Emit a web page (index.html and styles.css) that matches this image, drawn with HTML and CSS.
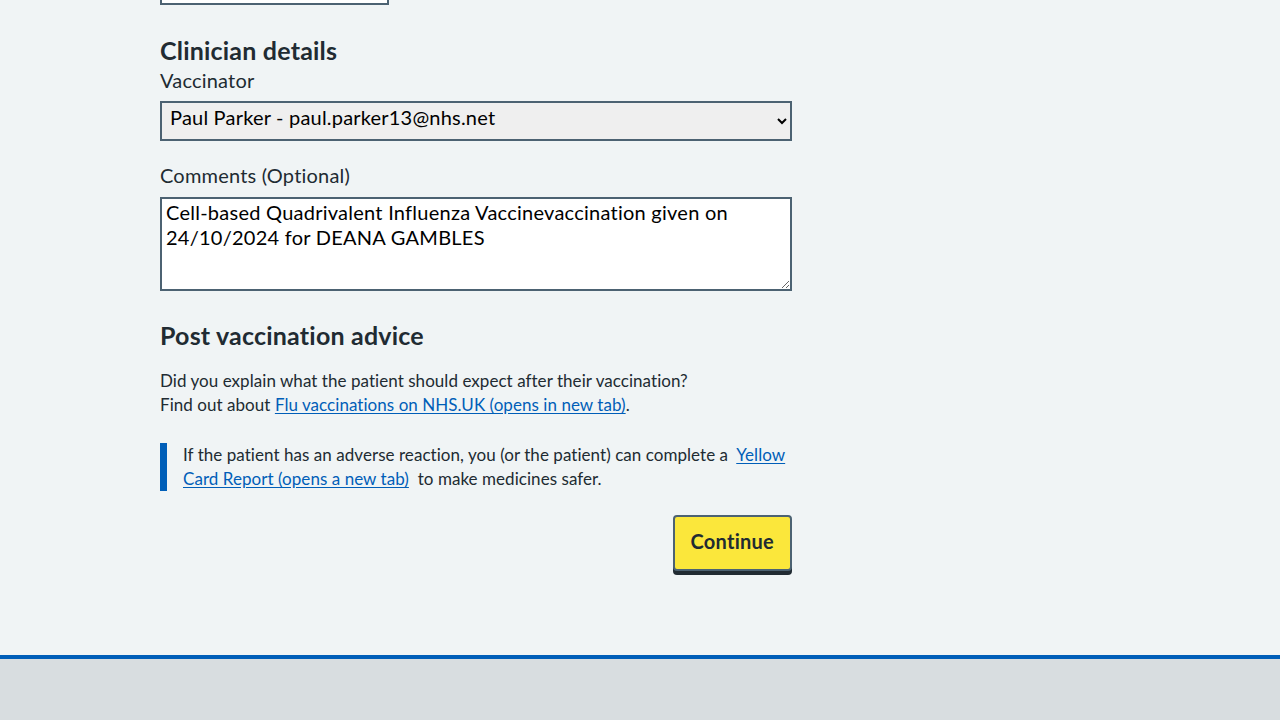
FILE: index.html
```html
<!DOCTYPE html>
<html lang="en">
<head>
<meta charset="utf-8">
<title>Clinician details</title>
<link rel="stylesheet" href="styles.css">
</head>
<body>
<main class="container">
  <div class="column">
    <div class="prev-input"></div>

    <h2 class="heading heading--first">Clinician details</h2>
    <div class="form-group">
      <label class="label" for="vaccinator">Vaccinator</label>
      <select id="vaccinator" class="select">
        <option>Paul Parker - paul.parker13@nhs.net</option>
      </select>
    </div>

    <div class="form-group form-group--comments">
      <label class="label label--comments" for="comments">Comments (Optional)</label>
      <textarea id="comments" class="textarea" rows="3">Cell-based Quadrivalent Influenza Vaccinevaccination given on 24/10/2024 for DEANA GAMBLES</textarea>
    </div>

    <h2 class="heading heading--advice">Post vaccination advice</h2>
    <p class="body">Did you explain what the patient should expect after their vaccination?<br>Find out about <a class="link" href="#">Flu vaccinations on NHS.UK (opens in new tab)</a>.</p>

    <div class="inset">
      <p class="inset__text">If the patient has an adverse reaction, you (or the patient) can complete a&nbsp; <a class="link" href="#">Yellow Card Report (opens a new tab)</a>&nbsp; to make medicines safer.</p>
    </div>

    <div class="actions">
      <button class="button" type="button">Continue</button>
    </div>
  </div>
</main>
<footer class="footer"></footer>
</body>
</html>
```
FILE: styles.css
```css
* { box-sizing: border-box; }

html, body {
  margin: 0;
  padding: 0;
}

body {
  background: #f0f4f5;
  color: #212b32;
  font-family: "Lato", "Noto Sans", sans-serif;
  overflow: hidden;
}

.container {
  width: 960px;
  margin: 0 auto;
  padding-bottom: 84px;
}

.column {
  width: 632px;
  display: flex;
  flex-direction: column;
  align-items: stretch;
}

.prev-input {
  width: 229px;
  height: 40px;
  margin-top: -35px;
  border: 2px solid #4c6272;
  background: #ffffff;
}

.heading {
  margin: 0;
  font-size: 25px;
  line-height: 32px;
  letter-spacing: 0.2px;
  font-weight: 700;
  color: #212b32;
}

.heading--first { margin-top: 29px; margin-bottom: 0; }
.heading--advice { margin-top: 28px; margin-bottom: 18px; }

.form-group {
  display: flex;
  flex-direction: column;
}

.form-group--comments { margin-top: 20px; }

.label {
  font-size: 20px;
  line-height: 28px;
  letter-spacing: 0.2px;
  margin-bottom: 7px;
  color: #212b32;
}

.label--comments { margin-bottom: 8px; }

.select {
  width: 100%;
  height: 40px;
  border: 2px solid #4c6272;
  border-radius: 0;
  background-color: #efefef;
  color: #000;
  font-family: inherit;
  font-size: 20px;
  letter-spacing: 0.2px;
  padding: 0 4px 9px 4px;
  margin: 0;
}

.textarea {
  width: 100%;
  height: 94px;
  border: 2px solid #4c6272;
  border-radius: 0;
  background: #ffffff;
  color: #000;
  font-family: inherit;
  font-size: 20px;
  letter-spacing: 0.25px;
  line-height: 25px;
  padding: 1px 4px 5px;
  margin: 0;
  resize: vertical;
}

.body {
  margin: 0;
  font-size: 17px;
  line-height: 24px;
  letter-spacing: 0.05px;
}

.link {
  color: #005eb8;
  text-decoration: underline;
  text-underline-offset: 2px;
}

.inset {
  margin-top: 26px;
  border-left: 7px solid #005eb8;
  padding-left: 16px;
}

.inset__text {
  margin: 0;
  font-size: 17px;
  line-height: 24px;
  letter-spacing: 0.05px;
}

.actions {
  display: flex;
  justify-content: flex-end;
  margin-top: 24px;
}

.button {
  font-family: inherit;
  font-size: 20px;
  font-weight: 700;
  letter-spacing: 0.25px;
  line-height: 28px;
  color: #212b32;
  background: #fbe73b;
  border: 2px solid #4c6272;
  border-radius: 4px;
  padding: 10px 16px 14px;
  box-shadow: 0 4px 0 #212b32;
  cursor: pointer;
}

.footer {
  background: #d8dde0;
  border-top: 4px solid #005eb8;
  height: 120px;
}
```
